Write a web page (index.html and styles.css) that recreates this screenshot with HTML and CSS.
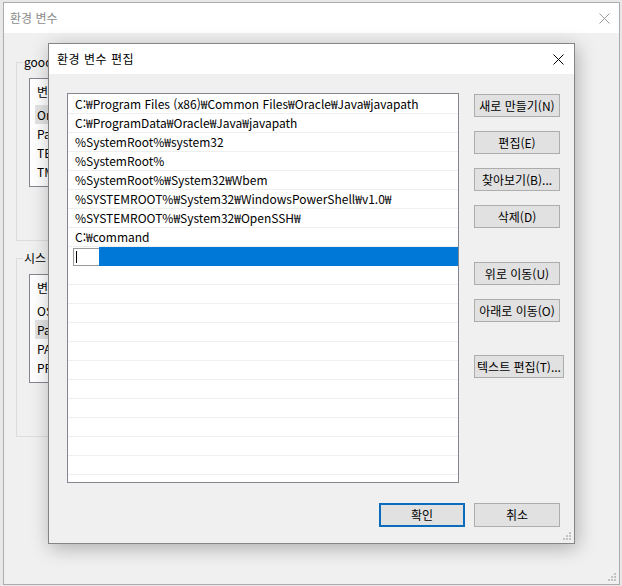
FILE: index.html
```html
<!DOCTYPE html>
<html lang="ko">
<head>
<meta charset="utf-8">
<title>환경 변수 편집</title>
<link rel="stylesheet" href="styles.css">
</head>
<body>
<div class="desktop">
  <div class="window outer">
    <div class="titlebar inactive">
      <span class="title">환경 변수</span>
      <svg class="close" width="11" height="11" viewBox="0 0 11 11"><path d="M0.5 0.5L10.5 10.5M10.5 0.5L0.5 10.5" stroke="#9a9a9a" stroke-width="1" fill="none"/></svg>
    </div>
    <div class="outer-body">
      <div class="group">
        <span class="group-label">good</span>
        <div class="vlist">
          <div class="vhead">변</div>
          <div class="vitem hl">On</div>
          <div class="vitem">Pa</div>
          <div class="vitem">TE</div>
          <div class="vitem">TM</div>
        </div>
      </div>
      <div class="group second">
        <span class="group-label">시스</span>
        <div class="vlist">
          <div class="vhead">변</div>
          <div class="vitem">OS</div>
          <div class="vitem hl">Pa</div>
          <div class="vitem">PA</div>
          <div class="vitem">PR</div>
        </div>
      </div>
    </div>
    <svg class="grip" width="8" height="8" viewBox="0 0 8 8"><g fill="#c2c2c2"><rect x="6" y="0" width="2" height="2"/><rect x="3" y="3" width="2" height="2"/><rect x="6" y="3" width="2" height="2"/><rect x="0" y="6" width="2" height="2"/><rect x="3" y="6" width="2" height="2"/><rect x="6" y="6" width="2" height="2"/></g></svg>
  </div>

  <div class="window dialog">
    <div class="titlebar">
      <span class="title">환경 변수 편집</span>
      <svg class="close" width="11" height="11" viewBox="0 0 11 11"><path d="M0.5 0.5L10.5 10.5M10.5 0.5L0.5 10.5" stroke="#000" stroke-width="1" fill="none"/></svg>
    </div>
    <div class="dialog-body">
      <div class="main">
        <div class="pathlist">
          <div class="row">C:₩Program Files (x86)₩Common Files₩Oracle₩Java₩javapath</div>
          <div class="row">C:₩ProgramData₩Oracle₩Java₩javapath</div>
          <div class="row">%SystemRoot%₩system32</div>
          <div class="row">%SystemRoot%</div>
          <div class="row">%SystemRoot%₩System32₩Wbem</div>
          <div class="row">%SYSTEMROOT%₩System32₩WindowsPowerShell₩v1.0₩</div>
          <div class="row">%SYSTEMROOT%₩System32₩OpenSSH₩</div>
          <div class="row">C:₩command</div>
          <div class="row editing"><span class="editbox"><span class="caret"></span></span><span class="selfill"></span></div>
          <div class="row"></div>
          <div class="row"></div>
          <div class="row"></div>
          <div class="row"></div>
          <div class="row"></div>
          <div class="row"></div>
          <div class="row"></div>
          <div class="row"></div>
          <div class="row"></div>
          <div class="row"></div>
          <div class="row"></div>
        </div>
        <div class="side">
          <button class="btn">새로 만들기(N)</button>
          <button class="btn">편집(E)</button>
          <button class="btn">찾아보기(B)...</button>
          <button class="btn">삭제(D)</button>
          <button class="btn sep">위로 이동(U)</button>
          <button class="btn">아래로 이동(O)</button>
          <button class="btn sep2 wide">텍스트 편집(T)...</button>
        </div>
      </div>
      <div class="footer">
        <button class="btn default">확인</button>
        <button class="btn">취소</button>
      </div>
    </div>
    <svg class="grip" width="8" height="8" viewBox="0 0 8 8"><g fill="#c2c2c2"><rect x="6" y="0" width="2" height="2"/><rect x="3" y="3" width="2" height="2"/><rect x="6" y="3" width="2" height="2"/><rect x="0" y="6" width="2" height="2"/><rect x="3" y="6" width="2" height="2"/><rect x="6" y="6" width="2" height="2"/></g></svg>
  </div>
</div>
</body>
</html>
```
FILE: styles.css
```css
html, body {
  margin: 0;
  padding: 0;
}
body {
  width: 622px;
  height: 586px;
  overflow: hidden;
  background: #e8e8e8;
  font-family: "Noto Sans CJK KR", "Noto Sans", sans-serif;
  font-size: 12px;
  color: #000;
}
.desktop {
  position: relative;
  width: 622px;
  height: 586px;
  overflow: hidden;
}
.window {
  position: absolute;
  box-sizing: border-box;
  background: #f0f0f0;
  display: flex;
  flex-direction: column;
}
.titlebar {
  height: 30px;
  flex: none;
  background: #fff;
  display: flex;
  align-items: center;
  justify-content: space-between;
}
.title {
  line-height: 16px;
}
.titlebar.inactive .title {
  color: #8c8c8c;
}

/* outer window (mostly hidden behind the dialog) */
.outer {
  left: 3px;
  top: 2px;
  width: 617px;
  height: 583px;
  border: 1px solid #acacac;
}
.outer .titlebar {
  padding: 0 9px 0 6px;
}
.outer-body {
  flex: 1;
  padding: 29px 0 0 12px;
}
.group {
  box-sizing: border-box;
  width: 60px;
  height: 179px;
  border: 1px solid #dcdcdc;
  border-right: none;
}
.group.second {
  margin-top: 17px;
}
.group-label {
  display: block;
  width: max-content;
  height: 16px;
  line-height: 16px;
  margin: -9px 0 0 6px;
  padding: 0 1px;
  background: #f0f0f0;
  white-space: nowrap;
}
.vlist {
  box-sizing: border-box;
  margin: 8px 0 0 12px;
  width: 40px;
  height: 109px;
  border: 1px solid #828790;
  border-right: none;
  background: #fff;
}
.vhead {
  height: 26px;
  line-height: 26px;
  padding-left: 7px;
  white-space: nowrap;
}
.vitem {
  height: 19px;
  line-height: 19px;
  margin-left: 5px;
  padding-left: 2px;
  white-space: nowrap;
}
.vitem.hl {
  background: #e3e3e3;
}

/* dialog */
.dialog {
  left: 48px;
  top: 43px;
  width: 527px;
  height: 501px;
  border: 1px solid #858585;
  box-shadow: 2px 4px 18px rgba(0, 0, 0, 0.28);
}
.dialog .titlebar {
  padding: 0 10px 0 8px;
}
.dialog .title {
  letter-spacing: 0.5px;
}
.dialog-body {
  flex: 1;
  display: flex;
  flex-direction: column;
  padding: 19px 14px 16px 18px;
}
.main {
  display: flex;
  gap: 15px;
  height: 390px;
}
.pathlist {
  flex: none;
  box-sizing: border-box;
  width: 392px;
  height: 390px;
  border: 1px solid #828790;
  background: #fff;
  padding-top: 1px;
  overflow: hidden;
}
.row {
  box-sizing: border-box;
  height: 19px;
  line-height: 18px;
  padding-left: 7px;
  border-bottom: 1px solid #efefef;
  white-space: nowrap;
}
.row.editing {
  display: flex;
  padding-left: 5px;
  border-bottom: none;
}
.editbox {
  box-sizing: border-box;
  width: 26px;
  height: 18px;
  margin-top: 1px;
  border: 1px solid #9a9a9a;
  border-right: none;
  background: #fff;
  display: flex;
  align-items: center;
  padding-left: 2px;
}
.caret {
  width: 1px;
  height: 12px;
  background: #000;
}
.selfill {
  flex: 1;
  background: #0078d7;
}
.side {
  flex: none;
  width: 86px;
  display: flex;
  flex-direction: column;
  align-items: flex-start;
  padding-top: 1px;
  gap: 14px;
}
.btn {
  flex: none;
  box-sizing: border-box;
  width: 86px;
  height: 23px;
  padding: 0;
  margin: 0;
  border: 1px solid #adadad;
  background: #e1e1e1;
  font-family: inherit;
  font-size: 12px;
  color: #000;
  line-height: 20px;
  text-align: center;
  white-space: nowrap;
}
.btn.sep {
  margin-top: 20px;
}
.btn.sep2 {
  margin-top: 19px;
}
.btn.wide {
  width: 90px;
}
.footer {
  margin-top: 20px;
  display: flex;
  justify-content: flex-end;
  gap: 9px;
}
.footer .btn {
  height: 24px;
}
.btn.default {
  border: 2px solid #0b6cbd;
}
.grip {
  position: absolute;
  right: 3px;
  bottom: 3px;
}
```
